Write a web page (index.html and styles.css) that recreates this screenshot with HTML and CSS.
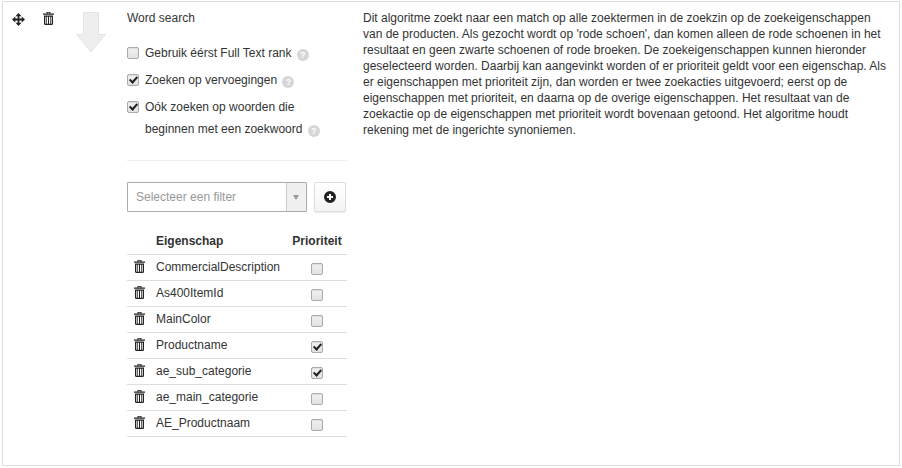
FILE: index.html
```html
<!DOCTYPE html>
<html lang="en">
<head>
    <meta charset="UTF-8">
    <meta name="viewport" content="width=device-width, initial-scale=1.0">
    <title>Word search</title>
    <link rel="stylesheet" href="styles.css">
</head>
<body>

<svg class="sprites" width="0" height="0">
    <symbol id="trash" viewBox="0 0 11 13">
        <path d="M3.500 1.500V0h4v1.500H11v1.300H0V1.500zM4.500 1.500h2V.8h-2z" fill-rule="evenodd"/>
        <path d="M1 3.400h9V12l-.8 1H1.800L1 12zM2.300 4.800v7h1v-7zM4 4.800v7h1v-7zM6 4.800v7h1v-7zM7.700 4.800v7h1v-7z" fill-rule="evenodd"/>
    </symbol>
</svg>

<div class="panel">
    <div class="tools">
        <svg class="move-icon" width="13" height="13" viewBox="0 0 13 13">
            <path d="M6.500 0l3 3.300H7.400v2.300h2.300V3.500l3.300 3-3.300 3V7.400H7.400v2.300h2.100l-3 3.300-3-3.300h2.100V7.400H3.300v2.100L0 6.500l3.300-3v2.100h2.300V3.300H3.500z"/>
        </svg>
        <svg class="trash-icon" width="11" height="13"><use href="#trash"/></svg>
        <svg class="arrow" width="30" height="41" viewBox="0 0 30 41">
            <path d="M7.500 .5h15v22h7L15 40 .5 22.500h7z"/>
        </svg>
    </div>

    <div class="settings">
        <div class="title">Word search</div>

        <div class="options">
            <label class="option">
                <input type="checkbox">
                <span>Gebruik éérst Full Text rank <i class="help">?</i></span>
            </label>
            <label class="option">
                <input type="checkbox" checked>
                <span>Zoeken op vervoegingen <i class="help">?</i></span>
            </label>
            <label class="option">
                <input type="checkbox" checked>
                <span>Oók zoeken op woorden die<br>beginnen met een zoekwoord <i class="help">?</i></span>
            </label>
        </div>

        <hr class="divider">

        <div class="filter-row">
            <div class="filter-select">
                <span class="filter-text">Selecteer een filter</span>
                <span class="filter-caret"></span>
            </div>
            <button class="add-button" type="button">
                <svg width="12" height="12" viewBox="0 0 12 12">
                    <path d="M6 0a6 6 0 1 1 0 12A6 6 0 0 1 6 0zM5 3v2H3v2h2v2h2V7h2V5H7V3z" fill-rule="evenodd"/>
                </svg>
            </button>
        </div>

        <table class="props">
            <thead>
                <tr><th></th><th class="name">Eigenschap</th><th class="prio">Prioriteit</th></tr>
            </thead>
            <tbody>
                <tr>
                    <td><svg class="trash-icon" width="11" height="13"><use href="#trash"/></svg></td>
                    <td class="name">CommercialDescription</td>
                    <td class="prio"><input type="checkbox"></td>
                </tr>
                <tr>
                    <td><svg class="trash-icon" width="11" height="13"><use href="#trash"/></svg></td>
                    <td class="name">As400ItemId</td>
                    <td class="prio"><input type="checkbox"></td>
                </tr>
                <tr>
                    <td><svg class="trash-icon" width="11" height="13"><use href="#trash"/></svg></td>
                    <td class="name">MainColor</td>
                    <td class="prio"><input type="checkbox"></td>
                </tr>
                <tr>
                    <td><svg class="trash-icon" width="11" height="13"><use href="#trash"/></svg></td>
                    <td class="name">Productname</td>
                    <td class="prio"><input type="checkbox" checked></td>
                </tr>
                <tr>
                    <td><svg class="trash-icon" width="11" height="13"><use href="#trash"/></svg></td>
                    <td class="name">ae_sub_categorie</td>
                    <td class="prio"><input type="checkbox" checked></td>
                </tr>
                <tr>
                    <td><svg class="trash-icon" width="11" height="13"><use href="#trash"/></svg></td>
                    <td class="name">ae_main_categorie</td>
                    <td class="prio"><input type="checkbox"></td>
                </tr>
                <tr>
                    <td><svg class="trash-icon" width="11" height="13"><use href="#trash"/></svg></td>
                    <td class="name">AE_Productnaam</td>
                    <td class="prio"><input type="checkbox"></td>
                </tr>
            </tbody>
        </table>
    </div>

    <p class="description">Dit algoritme zoekt naar een match op alle zoektermen in de zoekzin op de zoekeigenschappen van de producten. Als gezocht wordt op 'rode schoen', dan komen alleen de rode schoenen in het resultaat en geen zwarte schoenen of rode broeken. De zoekeigenschappen kunnen hieronder geselecteerd worden. Daarbij kan aangevinkt worden of er prioriteit geldt voor een eigenschap. Als er eigenschappen met prioriteit zijn, dan worden er twee zoekacties uitgevoerd; eerst op de eigenschappen met prioriteit, en daarna op de overige eigenschappen. Het resultaat van de zoekactie op de eigenschappen met prioriteit wordt bovenaan getoond. Het algoritme houdt rekening met de ingerichte synoniemen.</p>
</div>

</body>
</html>
```

FILE: styles.css
```css
html, body {
    margin: 0;
    padding: 0;
    background-color: #fff;
}

body {
    font-family: "Liberation Sans", Arial, sans-serif;
    font-size: 12px;
    line-height: 16px;
    color: #333;
}

.sprites {
    display: block;
}

/* Outer box */
.panel {
    display: flex;
    box-sizing: border-box;
    width: 898px;
    height: 465px;
    margin: 1px 0 0 2px;
    border: 1px solid #ddd;
}

/* Move, delete and arrow column */
.tools {
    display: flex;
    align-items: flex-start;
    box-sizing: border-box;
    width: 124px;
    flex: none;
    padding: 10px 0 0 9px;
}

.move-icon {
    margin-top: 1px;
    fill: #222;
}

.trash-icon {
    display: block;
    fill: #222;
}

.tools .trash-icon {
    margin-left: 18px;
}

.arrow {
    margin-left: 22px;
    fill: #eee;
    stroke: #e4e4e4;
}

/* Settings column */
.settings {
    width: 220px;
    flex: none;
    padding-top: 8px;
}

.options {
    display: flex;
    flex-direction: column;
    gap: 5px;
    margin-top: 16px;
    line-height: 22px;
}

.option {
    display: flex;
    gap: 6px;
}

input[type="checkbox"] {
    appearance: none;
    position: relative;
    box-sizing: border-box;
    width: 12px;
    height: 12px;
    margin: 0;
    flex: none;
    border: 1px solid #aaa;
    border-radius: 2px;
    background: linear-gradient(#f2f2f2, #e2e2e2);
    box-shadow: inset 0 1px 1px rgba(0, 0, 0, 0.08);
}

.option input[type="checkbox"] {
    margin-top: 5px;
}

input[type="checkbox"]:checked::after {
    content: "";
    position: absolute;
    left: 3px;
    top: 0;
    width: 3px;
    height: 6px;
    border: solid #222;
    border-width: 0 2px 2px 0;
    transform: rotate(42deg);
}

.help {
    display: inline-block;
    width: 12px;
    height: 12px;
    margin-left: 2px;
    border-radius: 50%;
    background-color: #d6d6d6;
    color: #fff;
    font-size: 9px;
    font-style: normal;
    font-weight: bold;
    line-height: 12px;
    text-align: center;
    vertical-align: -1px;
}

.divider {
    height: 1px;
    margin: 20px 0 21px;
    border: 0;
    background-color: #eee;
}

/* Filter */
.filter-row {
    display: flex;
    gap: 7px;
}

.filter-select {
    display: flex;
    box-sizing: border-box;
    width: 180px;
    height: 30px;
    border: 1px solid #aaa;
    border-radius: 1px;
}

.filter-text {
    flex: 1;
    padding-left: 8px;
    color: #999;
    line-height: 28px;
}

.filter-caret {
    position: relative;
    width: 19px;
    border-left: 1px solid #ccc;
    background-color: #f0f0f0;
}

.filter-caret::after {
    content: "";
    position: absolute;
    left: 6px;
    top: 12px;
    border: 3.500px solid transparent;
    border-top: 5px solid #999;
    border-bottom: 0;
}

.add-button {
    display: flex;
    align-items: center;
    justify-content: center;
    box-sizing: border-box;
    width: 32px;
    height: 30px;
    padding: 0;
    border: 1px solid #ddd;
    border-radius: 2px;
    background: linear-gradient(#fff, #f4f4f4);
    box-shadow: 0 1px 1px rgba(0, 0, 0, 0.08);
}

.add-button svg {
    fill: #222;
}

/* Properties table */
.props {
    width: 220px;
    margin-top: 16px;
    border-collapse: collapse;
    table-layout: fixed;
}

.props th {
    height: 26px;
    padding: 0;
    border-bottom: 1px solid #ddd;
    font-weight: bold;
    text-align: left;
}

.props td {
    height: 26px;
    padding: 0 0 2px;
    box-sizing: border-box;
    border-bottom: 1px solid #ddd;
}

.props th:first-child,
.props td:first-child {
    width: 29px;
}

.props td:first-child .trash-icon {
    margin-left: 7px;
}

.props .prio {
    width: 60px;
    text-align: center;
}

.props td.prio {
    padding-bottom: 0;
}

.props td.prio input {
    display: block;
    margin: 3px auto 0;
}

/* Explanation */
.description {
    width: 526px;
    margin: 0;
    padding: 8px 0 0 16px;
}
```
